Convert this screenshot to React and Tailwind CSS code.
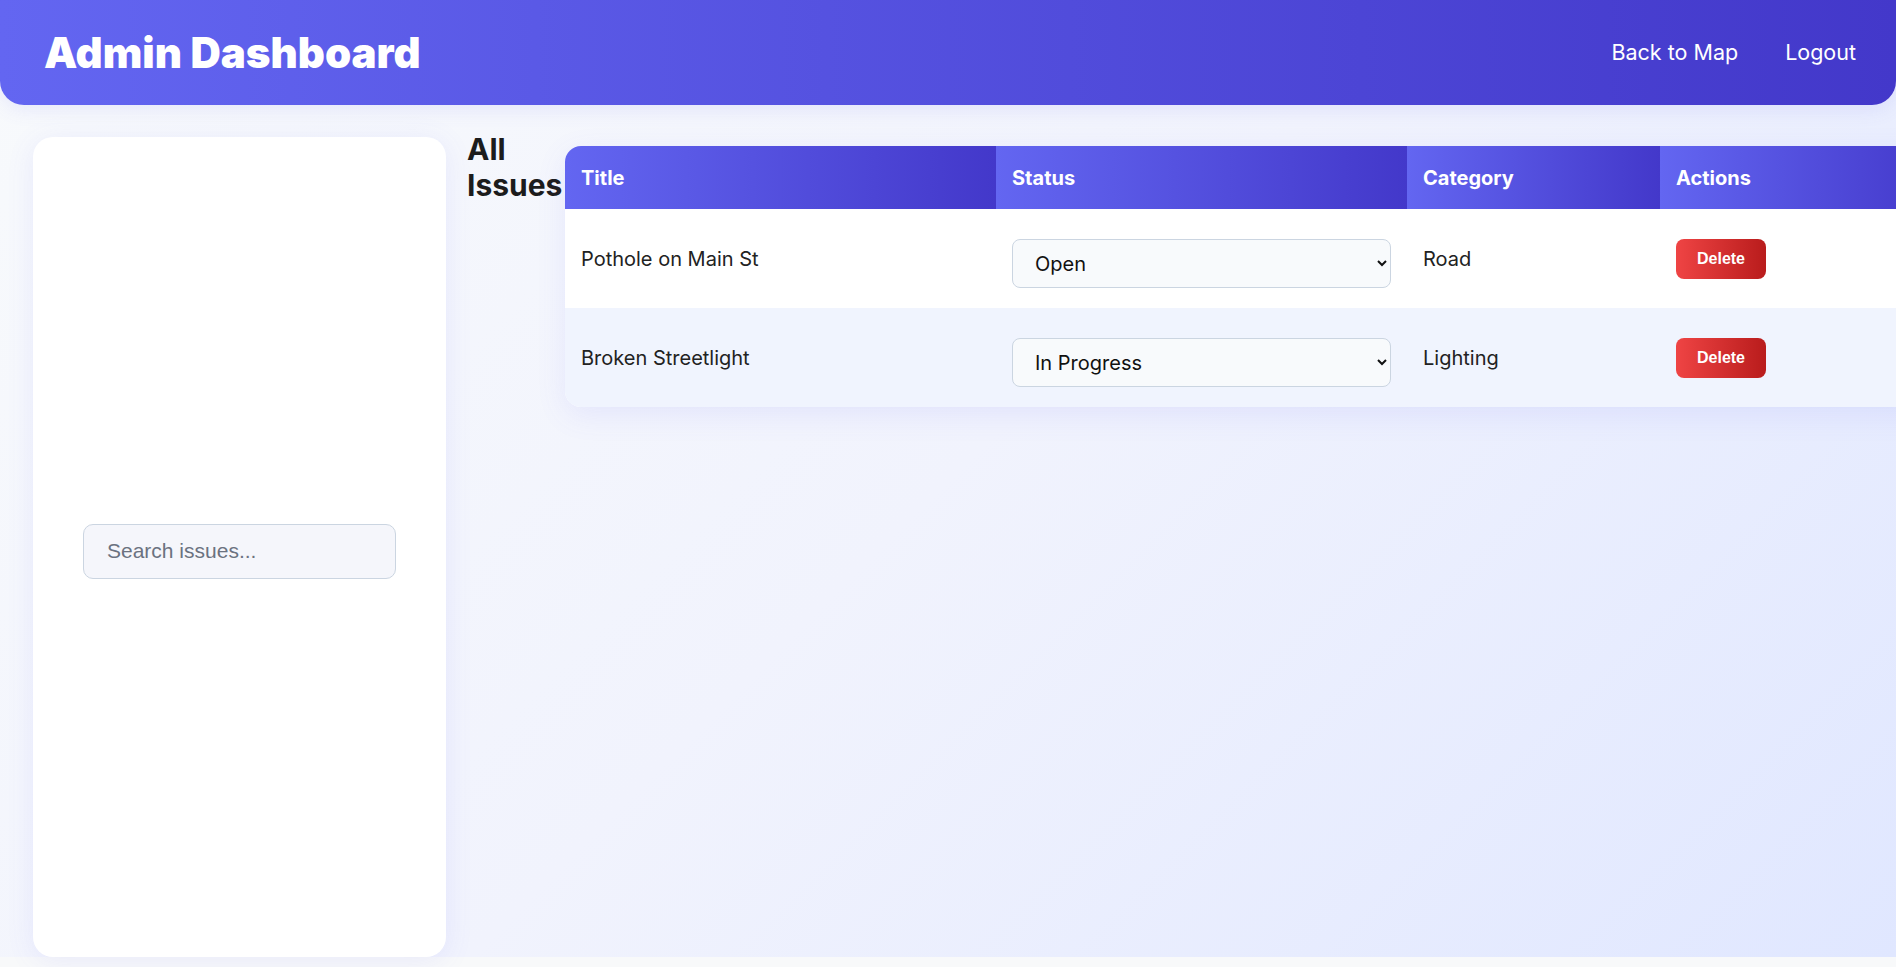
const issues = [
  { id: 1, title: 'Pothole on Main St', status: 'Open', category: 'Road' },
  { id: 2, title: 'Broken Streetlight', status: 'In Progress', category: 'Lighting' },
]

const statuses = ['Open', 'In Progress', 'Resolved']

const thClass =
  'text-left font-bold text-white text-[20px] leading-[24px] px-4 py-[19.5px] bg-[linear-gradient(90deg,#6366f1,#4338ca)]'

export default function App() {
  return (
    <div className="w-full h-[967px] overflow-hidden bg-[#f8f9fa] font-['Inter','Noto_Sans',sans-serif]">
      <div className="h-[957px] flex flex-col bg-[linear-gradient(135deg,#f8fafc_0%,#f1f3fd_50%,#e0e7ff_100%)]">
        {/* Top bar */}
        <header className="h-[105px] shrink-0 flex items-center justify-between pl-[44px] pr-[40px] rounded-b-[24px] bg-[linear-gradient(90deg,#6366f1,#4338ca)] shadow-[0_4px_20px_rgba(99,102,241,0.12)]">
          <h1 className="text-[42px] leading-[48px] font-black text-white">
            Admin Dashboard
          </h1>
          <nav className="flex items-center gap-[47px] text-[21.5px] text-white">
            <a href="#">Back to Map</a>
            <a href="#">Logout</a>
          </nav>
        </header>

        <main className="flex flex-1 min-h-0 pt-[32px] pl-[33px] gap-[21px]">
          {/* Sidebar with search */}
          <aside className="w-[413px] shrink-0 bg-white rounded-[20px] flex items-center justify-center px-[50px] shadow-[0_4px_28px_rgba(99,102,241,0.10)]">
            <input
              type="text"
              placeholder="Search issues..."
              className="w-full h-[55px] mt-[8px] rounded-[10px] border border-[#cbd5e1] bg-[#f5f6fb] pl-[23px] pr-3 text-[21px] font-['Liberation_Sans',Arial,sans-serif] text-[#333] placeholder:text-[#6b7280] outline-none"
            />
          </aside>

          {/* Issues list */}
          <section className="flex items-start min-w-0">
            <h2 className="w-[98px] shrink-0 -mt-[6px] text-[30px] leading-[36px] font-bold text-[#1c1c1c]">
              All Issues
            </h2>
            <div className="mt-[9px] shrink-0 rounded-[16px] overflow-hidden bg-white shadow-[0_8px_30px_rgba(99,102,241,0.10)]">
              <table className="table-fixed border-collapse w-[1375px]">
                <colgroup>
                  <col className="w-[431px]" />
                  <col className="w-[411px]" />
                  <col className="w-[253px]" />
                  <col className="w-[280px]" />
                </colgroup>
                <thead>
                  <tr>
                    <th className={thClass}>Title</th>
                    <th className={thClass}>Status</th>
                    <th className={thClass}>Category</th>
                    <th className={thClass}>Actions</th>
                  </tr>
                </thead>
                <tbody>
                  {issues.map((issue, i) => (
                    <tr key={issue.id} className={i % 2 === 1 ? 'bg-[#f0f4fe]' : 'bg-white'}>
                      <td className="px-4 py-[20px] align-middle text-[20px] leading-[24px] text-[#222]">
                        {issue.title}
                      </td>
                      <td className="px-4 py-[20px] align-middle">
                        <select
                          defaultValue={issue.status}
                          className="block w-full h-[49px] mt-[10px] rounded-[8px] border border-[#cbd5e1] bg-[#f8fafc] pl-[18px] pr-[4px] text-[20px] text-[#111]"
                        >
                          {statuses.map((s) => (
                            <option key={s} value={s}>
                              {s}
                            </option>
                          ))}
                        </select>
                      </td>
                      <td className="px-4 py-[20px] align-middle text-[20px] leading-[24px] text-[#222]">
                        {issue.category}
                      </td>
                      <td className="px-4 py-[20px] align-middle">
                        <button className="block w-[90px] h-[40px] rounded-[8px] bg-[linear-gradient(90deg,#ef4444,#b91c1c)] text-white font-bold text-[16px] font-['Liberation_Sans',Arial,sans-serif]">
                          Delete
                        </button>
                      </td>
                    </tr>
                  ))}
                </tbody>
              </table>
            </div>
          </section>
        </main>
      </div>
    </div>
  )
}
